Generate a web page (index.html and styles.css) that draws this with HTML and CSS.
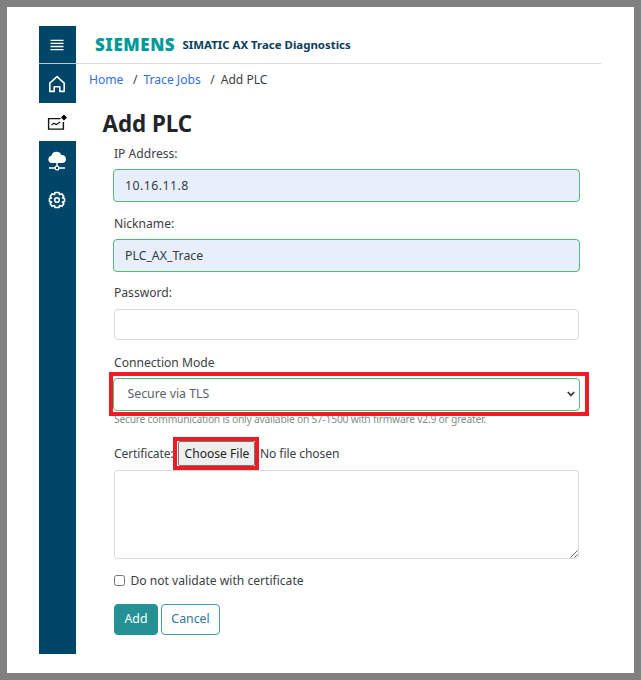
FILE: index.html
```html
<!DOCTYPE html>
<html lang="en">
<head>
<meta charset="utf-8">
<title>SIMATIC AX Trace Diagnostics</title>
<link rel="stylesheet" href="styles.css">
</head>
<body>
<div class="app">
  <nav class="sidebar">
    <a class="nav-item nav-menu"><svg width="14" height="12" viewBox="0 0 14 12"><path d="M.5 1.300h13M.5 4.400h13M.5 7.500h13M.5 10.600h13" stroke="#fff" stroke-width="1.300"/></svg></a>
    <a class="nav-item"><svg width="18" height="18" viewBox="0 0 18 18"><path d="M1.8 8.200 9 1.700l7.200 6.500v8.200h-4.400v-4.700H6.200v4.700H1.800z" fill="none" stroke="#fff" stroke-width="1.600" stroke-linejoin="round"/></svg></a>
    <a class="nav-item nav-active"><svg width="22" height="18" viewBox="0 0 22 18"><path d="M14.500 4.600H2.600v10.500h14.800V8" fill="none" stroke="#111" stroke-width="1.400"/><path d="m5.500 11 2.400-1.800 2.300 1.300 4-2.500" fill="none" stroke="#111" stroke-width="1.100"/><path d="M18 .5 21 3.500 18 6.500 15 3.500z" fill="#000"/></svg></a>
    <a class="nav-item"><svg width="20" height="20" viewBox="0 0 20 20"><path d="M4.600 12a3.700 3.700 0 0 1-.2-7.300A5.300 5.300 0 0 1 14.400 4a4 4 0 0 1 1 8z" fill="#fff"/><path d="M10 11v4M2 17h6M12 17h6" stroke="#fff" stroke-width="1.400"/><circle cx="10" cy="17" r="1.900" fill="none" stroke="#fff" stroke-width="1.300"/></svg></a>
    <a class="nav-item"><svg width="18" height="18" viewBox="0 0 18 18"><path d="M7 1.500h4l.5 2 2.500-.6 1.800 2.600L14.500 7l2 .5v3l-2 .5 1.300 1.700-1.800 2.500-2.500-.7-.5 2H7l-.5-2-2.500.7-1.800-2.500L3.500 11l-2-.5v-3l2-.5-1.300-1.500L4 2.900l2.500.6z" fill="none" stroke="#fff" stroke-width="1.600" stroke-linejoin="round"/><circle cx="9" cy="9" r="2.300" fill="none" stroke="#fff" stroke-width="1.600"/></svg></a>
  </nav>
  <main class="main">
    <header class="header"><span class="logo">SIEMENS</span><span class="product">SIMATIC AX Trace Diagnostics</span></header>
    <div class="crumbs"><a>Home</a><span class="sep">/</span><a>Trace Jobs</a><span class="sep">/</span><span>Add PLC</span></div>
    <h1>Add PLC</h1>
    <form class="form">
      <div class="field"><label>IP Address:</label><input class="control valid ip" type="text" value="10.16.11.8"></div>
      <div class="field"><label>Nickname:</label><input class="control valid" type="text" value="PLC_AX_Trace"></div>
      <div class="field"><label>Password:</label><input class="control" type="password"></div>
      <div class="field mode"><label>Connection Mode</label>
        <div class="select"><span>Secure via TLS</span><svg width="8" height="6" viewBox="0 0 8 6"><path d="m.8 1 3.200 3.400L7.200 1" fill="none" stroke="#343a40" stroke-width="1.700"/></svg><i class="mark mark-mode"></i></div>
        <p class="hint">Secure communication is only available on S7-1500 with firmware v2.9 or greater.</p>
      </div>
      <div class="cert"><span class="cert-label">Certificate:</span><span class="file">Choose File<i class="mark mark-file"></i></span><span class="nofile">No file chosen</span></div>
      <div class="area"><svg width="8" height="8" viewBox="0 0 8 8"><path d="M.5 7.500l7-7M4.500 7.500l3-3" stroke="#555" stroke-width=".9"/></svg></div>
      <label class="check"><input type="checkbox"><span>Do not validate with certificate</span></label>
      <div class="actions"><button type="button" class="btn add">Add</button><button type="button" class="btn cancel">Cancel</button></div>
    </form>
  </main>
</div>
</body>
</html>
```
FILE: styles.css
```css
* { box-sizing: border-box; }
body {
  margin: 0;
  height: 680px;
  border: 7px solid #808080;
  padding: 19px 33px 19px 32px;
  background: #fff;
  color: #3b4045;
  font: 12.1px/18px "Noto Sans", sans-serif;
  white-space: nowrap;
  overflow: hidden;
}
.app { display: flex; height: 628px; }
.sidebar { width: 37px; background: #004669; flex: none; }
.nav-item { display: flex; align-items: center; justify-content: center; height: 38.700px; padding: 1px 1px 0 0; }
.nav-menu { height: 38px; border-bottom: 1px solid #b8cbd5; }
.nav-active { background: #fff; }
.main { flex: 1; min-width: 0; }
.header { height: 38px; border-bottom: 1px solid #d9dadb; display: flex; align-items: center; padding-left: 19px; }
.logo { width: 87.500px; color: #009999; font-size: 17px; font-weight: 900; letter-spacing: .55px; }
.product { color: #0b3d5c; font-size: 11.450px; font-weight: 700; }
.crumbs { display: flex; padding: 7px 0 0 13px; height: 43px; }
.crumbs a { color: #2f6fdc; }
.sep { margin: 0 6px 0 9.500px; }
h1 { margin: 0 0 0 26.500px; font-size: 22.300px; line-height: 34px; font-weight: 700; color: #212529; height: 38px; }
.form { padding: 0 22px 0 38px; }
.field { height: 69.500px; }
.field label { display: block; height: 25px; line-height: 18px; }
.control, .select {
  display: block;
  width: 465px;
  height: 31px;
  border: 1px solid #d5d9df;
  border-radius: 4px;
  padding: 0 11px;
  font: inherit;
  font-size: 12.300px;
  color: #343a40;
  background: #fff;
}
.control.valid { background: #e8effc; }
.control.ip { letter-spacing: .45px; }
.control.valid, .select { border-color: #55b873; width: 467px; margin: -1px 0 0 -1px; height: 33px; }
.field.mode { height: 87px; }
.select { position: relative; display: flex; align-items: center; justify-content: space-between; padding: 0 4px 0 13.500px; color: #5b6269; }
.mark { position: absolute; border: 4px solid #ed1c24; }
.mark-mode { left: -5px; top: -7px; width: 480px; height: 44px; }
.hint { margin: 0; font-size: 10.300px; letter-spacing: -.24px; line-height: 17px; color: #868d94; }
.cert { display: flex; align-items: center; height: 26px; margin-bottom: 3px; }
.cert-label { width: 64px; letter-spacing: -.15px; }
.file { position: relative; width: 77px; height: 25px; line-height: 23px; text-align: center; border: 1px solid #777; border-radius: 2px; background: #efefef; color: #222; padding-left: 1px; }
.mark-file { left: -6px; top: -5px; width: 86px; height: 33px; }
.nofile { margin-left: 5px; letter-spacing: -.1px; }
.area { width: 465px; height: 89px; border: 1px solid #d5d9df; border-radius: 4px; display: flex; justify-content: flex-end; align-items: flex-end; }
.check { display: flex; align-items: center; height: 18px; margin-top: 13px; }
.check input { width: 11px; height: 11px; margin: 0 5.500px 0 0; }
.actions { display: flex; gap: 3px; margin-top: 14px; }
.btn { height: 31px; border-radius: 4px; border: 1px solid #249195; padding: 0; font: inherit; font-size: 12.300px; }
.add { width: 44px; background: #249195; color: #fff; }
.cancel { width: 59px; background: #fff; color: #2c7897; border-color: #3f99b4; }
```
